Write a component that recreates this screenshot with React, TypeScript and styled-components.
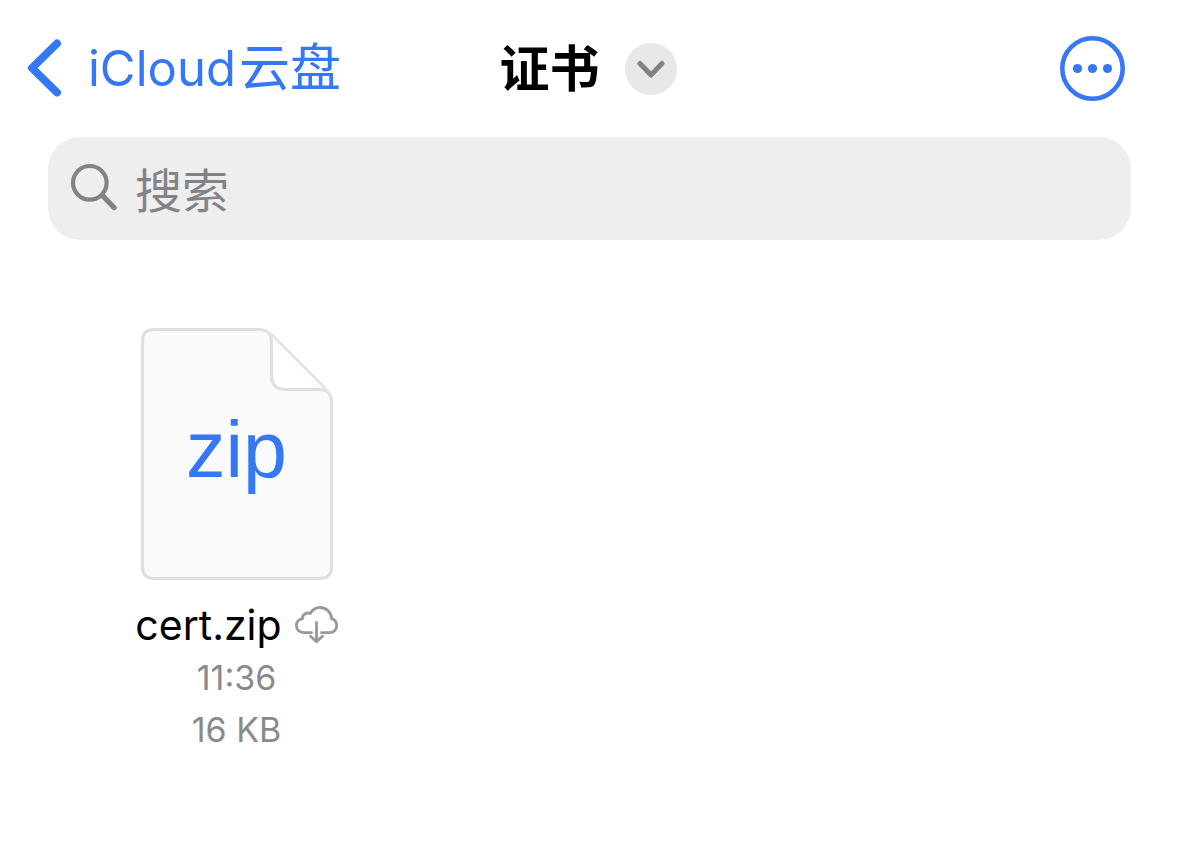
import React from "react";
import styled, { createGlobalStyle } from "styled-components";

const blue = "#3478f6";
const grey = "#8a8a8c";

const GlobalStyle = createGlobalStyle`
  * { box-sizing: border-box; }
  body {
    margin: 0;
    background: #fff;
    color: #000;
    font-family: Inter, "Noto Sans CJK SC", sans-serif;
  }
  button { font: inherit; color: inherit; border: 0; padding: 0; background: none; cursor: pointer; }
`;

const NavBar = styled.header`
  display: grid;
  grid-template-columns: 1fr auto 1fr;
  align-items: center;
  height: 137px;
  padding: 0 54px 0 26px;
`;

const BackLink = styled.a`
  display: flex;
  align-items: center;
  gap: 24px;
  color: ${blue};
  font-size: 51px;
  line-height: 60px;
  text-decoration: none;
  white-space: nowrap;
`;

const BackLabel = styled.span`
  display: flex;
  align-items: baseline;
  gap: 3px;
`;

const BrandName = styled.span`
  font-size: 49px;
`;

const TitleGroup = styled.div`
  display: flex;
  align-items: center;
  gap: 25px;
  padding-left: 25px;
`;

const Title = styled.h1`
  margin: 0;
  font-size: 50px;
  line-height: 60px;
  font-weight: 700;
`;

const TitleMenuButton = styled.button`
  display: grid;
  place-items: center;
  width: 52px;
  height: 52px;
  border-radius: 50%;
  background: #e8e8e8;
`;

const MoreButton = styled.button`
  display: block;
  justify-self: end;
  width: 65px;
  height: 65px;
`;

const Icon = styled.svg`
  display: block;
  flex: none;
`;

const SearchField = styled.label`
  display: flex;
  align-items: center;
  gap: 17px;
  height: 103px;
  margin: 0 48px;
  padding: 0 22px;
  border-radius: 32px;
  background: #eee;
  color: #838387;
`;

const SearchInput = styled.input`
  flex: 1;
  min-width: 0;
  padding: 5px 0 0;
  border: 0;
  outline: 0;
  background: transparent;
  font: inherit;
  font-size: 47px;
  line-height: 60px;
  &::placeholder { color: #838387; opacity: 1; }
`;

const FileGrid = styled.main`
  display: grid;
  grid-template-columns: repeat(3, 1fr);
  padding: 88px 0 88px 48px;
`;

const FileTile = styled.article`
  display: flex;
  flex-direction: column;
  align-items: center;
`;

const DocumentIcon = styled.div`
  display: grid;
  place-items: center;
  > * { grid-area: 1 / 1; }
`;

const Extension = styled.span`
  padding-bottom: 8px;
  color: ${blue};
  font-family: "Liberation Sans", Arial, sans-serif;
  font-size: 79px;
  line-height: 96px;
`;

const FileName = styled.h2`
  display: flex;
  align-items: center;
  gap: 13px;
  margin: 19px 0 1px;
  font-size: 41px;
  line-height: 52px;
  font-weight: 400;
`;

const FileDetail = styled.p`
  margin: 0;
  color: ${grey};
  font-size: 34px;
  line-height: 52px;
`;

export default function App() {
  return (
    <>
      <GlobalStyle />
      <NavBar>
        <BackLink href="#icloud">
          <Icon width="38" height="60" viewBox="0 0 38 60" fill="none" stroke="currentColor" strokeWidth="8" strokeLinecap="round" strokeLinejoin="round" aria-hidden="true">
            <path d="M31 4.500 6 29 31 53.500" />
          </Icon>
          <BackLabel><BrandName>iCloud</BrandName><span>云盘</span></BackLabel>
        </BackLink>
        <TitleGroup>
          <Title>证书</Title>
          <TitleMenuButton aria-label="文件夹选项">
            <Icon width="28" height="18" viewBox="0 0 28 18" fill="none" stroke="#838387" strokeWidth="5" strokeLinecap="round" strokeLinejoin="round" aria-hidden="true">
              <path d="M3 3.500 14 15 25 3.500" />
            </Icon>
          </TitleMenuButton>
        </TitleGroup>
        <MoreButton aria-label="更多">
          <Icon width="65" height="65" viewBox="0 0 65 65" fill={blue} aria-hidden="true">
            <circle cx="32.500" cy="32.500" r="30.200" fill="none" stroke={blue} strokeWidth="4.600" />
            <circle cx="17.500" cy="32.500" r="4.600" />
            <circle cx="32.500" cy="32.500" r="4.600" />
            <circle cx="47.500" cy="32.500" r="4.600" />
          </Icon>
        </MoreButton>
      </NavBar>
      <SearchField>
        <Icon width="48" height="52" viewBox="0 0 48 52" fill="none" stroke="currentColor" strokeLinecap="round" aria-hidden="true">
          <circle cx="19.800" cy="19.800" r="16.800" strokeWidth="4.200" />
          <path d="M32.500 32.500 44 44.500" strokeWidth="5.400" />
        </Icon>
        <SearchInput type="search" placeholder="搜索" aria-label="搜索" />
      </SearchField>
      <FileGrid>
        <FileTile>
          <DocumentIcon>
            <Icon width="192" height="252" viewBox="0 0 192 252" stroke="#dfdfdf" strokeWidth="3" strokeLinejoin="round" aria-hidden="true">
              <path d="M127 5 187 64 H146 Q130 62 130 46Z" fill="#fff" stroke="none" />
              <path d="M13 1.500H118Q130.500 1.500 130.500 14V47Q130.500 61.500 145 61.500H178Q190.500 61.500 190.500 74V239Q190.500 250.500 179 250.500H13Q1.500 250.500 1.500 239V13Q1.500 1.500 13 1.500Z" fill="#fafafa" />
              <path d="M125 3.500Q128 4 131 7L184 60Q187 63 188.500 66" fill="none" stroke="#e4e4e4" />
            </Icon>
            <Extension>zip</Extension>
          </DocumentIcon>
          <FileName>
            cert.zip
            <Icon width="43" height="38" viewBox="0 0 43 38" fill="none" stroke="#99999c" strokeWidth="2.800" strokeLinecap="round" strokeLinejoin="round" role="img" aria-label="从云端下载">
              <path d="M16.500 26.700H9.500C4.800 26.700 1.400 23.700 1.400 19.800C1.400 16 3.900 13.200 7.300 12.900C7.300 8.500 11.500 6 15.200 7.500C17.400 3.800 20.700 1.500 25 1.500C31.500 1.500 36.300 6.300 36.500 12.600C39.700 13.600 41.700 16.300 41.700 19.600C41.700 23.600 38.500 26.700 34.300 26.700H26.500" />
              <path d="M21.500 16.500V35.500M15.500 30.200 21.500 35.800 27.500 30.200" />
            </Icon>
          </FileName>
          <FileDetail>11:36</FileDetail>
          <FileDetail>16 KB</FileDetail>
        </FileTile>
      </FileGrid>
    </>
  );
}
